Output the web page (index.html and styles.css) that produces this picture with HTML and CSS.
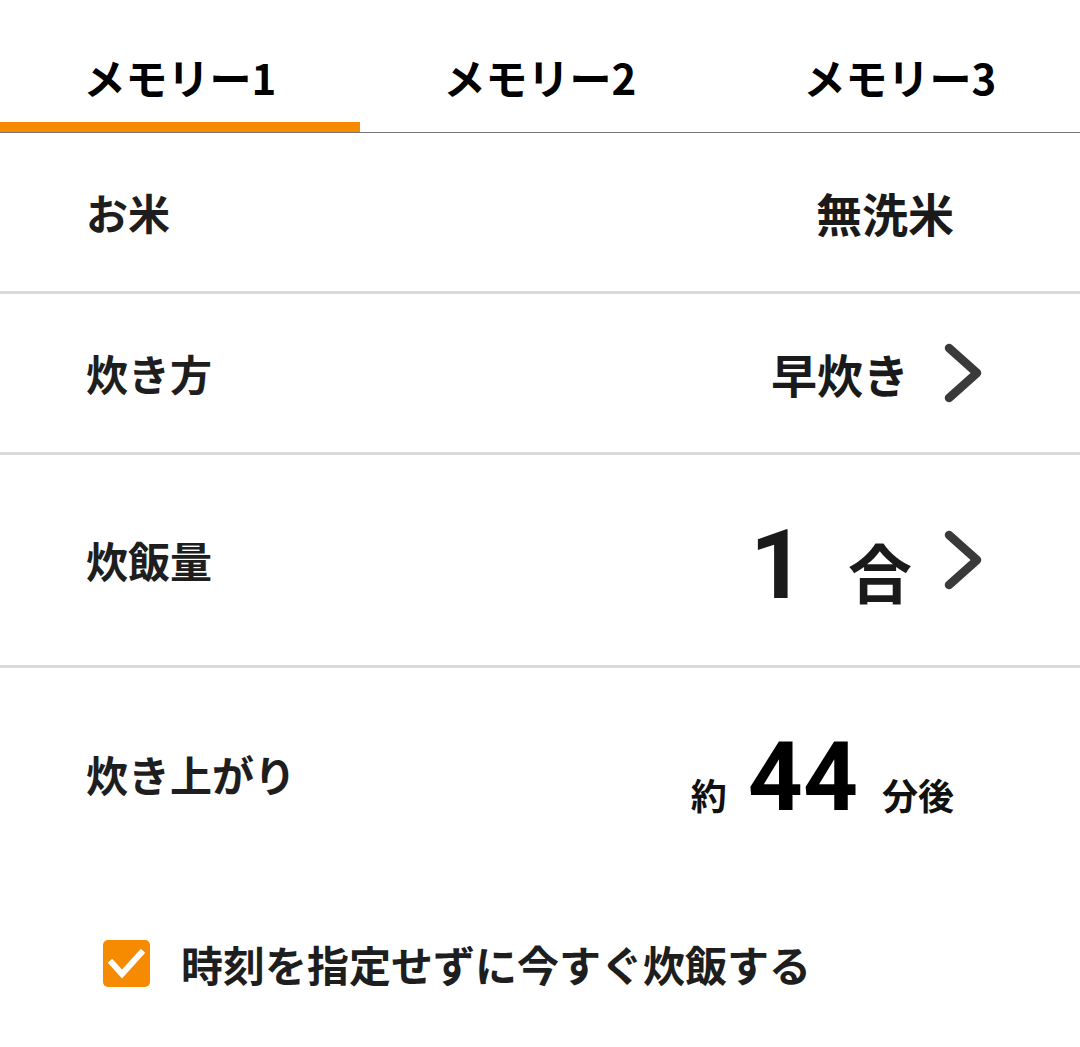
FILE: index.html
```html
<!DOCTYPE html>
<html lang="ja">
<head>
<meta charset="utf-8">
<title>メモリー</title>
<link rel="stylesheet" href="styles.css">
</head>
<body>
<div class="screen">
  <nav class="tabs">
    <div class="tab active">メモリー1</div>
    <div class="tab">メモリー2</div>
    <div class="tab">メモリー3</div>
  </nav>

  <div class="row short">
    <div class="label">お米</div>
    <div class="value plain"><span class="val-text">無洗米</span></div>
  </div>

  <div class="row short">
    <div class="label">炊き方</div>
    <div class="value">
      <span class="val-text">早炊き</span>
      <svg class="chev" width="40" height="62" viewBox="0 0 40 62"><path d="M7 6 L35 31 L7 56" fill="none" stroke="#3a3a3a" stroke-width="8.5" stroke-linecap="round" stroke-linejoin="round"/></svg>
    </div>
  </div>

  <div class="row tall">
    <div class="label">炊飯量</div>
    <div class="value">
      <span class="amount"><span class="big">1</span><span class="unit">合</span></span>
      <svg class="chev" width="40" height="62" viewBox="0 0 40 62"><path d="M7 6 L35 31 L7 56" fill="none" stroke="#3a3a3a" stroke-width="8.5" stroke-linecap="round" stroke-linejoin="round"/></svg>
    </div>
  </div>

  <div class="row finish">
    <div class="label">炊き上がり</div>
    <div class="value plain">
      <span class="amount time"><span class="small">約</span><span class="big num">44</span><span class="small">分後</span></span>
    </div>
  </div>

  <div class="check-row">
    <span class="checkbox">
      <svg width="47" height="47" viewBox="0 0 47 47"><path d="M9 23 L19 34 L38 13" fill="none" stroke="#fff" stroke-width="6" stroke-linecap="square"/></svg>
    </span>
    <span class="check-label">時刻を指定せずに今すぐ炊飯する</span>
  </div>
</div>
</body>
</html>
```

FILE: styles.css
```css
* { box-sizing: border-box; }
html, body {
  margin: 0;
  padding: 0;
  background: #ffffff;
}
body {
  font-family: "Noto Sans CJK JP", "Noto Sans", sans-serif;
  font-weight: 700;
  color: #1e1e1e;
}
.screen {
  width: 1080px;
  height: 1047px;
  display: flex;
  flex-direction: column;
}
.tabs {
  display: flex;
  border-bottom: 1px solid #777777;
}
.tab {
  flex: 1;
  height: 132px;
  padding-top: 56px;
  font-size: 42px;
  line-height: 42px;
  text-align: center;
  color: #000;
  border-bottom: 10px solid transparent;
}
.tab.active {
  border-bottom-color: #f68a00;
}
.row {
  display: flex;
  align-items: center;
  justify-content: space-between;
  padding: 0 98px 0 86px;
  border-bottom: 3px solid #dadada;
}
.row.short { height: 161px; }
.row.tall { height: 213px; }
.row.finish { height: 212px; border-bottom: none; }
.label {
  font-size: 42px;
  line-height: 42px;
  color: #1e1e1e;
}
.value {
  display: flex;
  align-items: center;
  color: #1a1a1a;
}
.value.plain { padding-right: 28px; }
.val-text {
  font-size: 46px;
  line-height: 46px;
  margin-right: 33px;
}
.value.plain .val-text { margin-right: 0; }
.chev { display: block; }
.amount {
  display: flex;
  align-items: baseline;
  margin-right: 30px;
  padding-top: 10px;
}
.amount .big {
  font-family: Roboto, "Noto Sans", sans-serif;
  font-size: 96px;
  line-height: 96px;
  color: #1a1a1a;
}
.amount .unit {
  font-size: 64px;
  line-height: 64px;
  margin-left: 43px;
}
.amount.time {
  margin-right: 0;
  padding-top: 6px;
}
.amount.time .big {
  color: #000;
  margin: 0 24px 0 21px;
}
.amount .small {
  font-size: 36px;
  line-height: 36px;
  color: #111;
}
.check-row {
  flex: 1;
  display: flex;
  align-items: center;
  padding-left: 103px;
}
.checkbox {
  width: 47px;
  height: 47px;
  background: #f68a00;
  border-radius: 5px;
  display: flex;
}
.checkbox svg { display: block; }
.check-label {
  margin-left: 31px;
  font-size: 42px;
  line-height: 42px;
  color: #1e1e1e;
}
```
